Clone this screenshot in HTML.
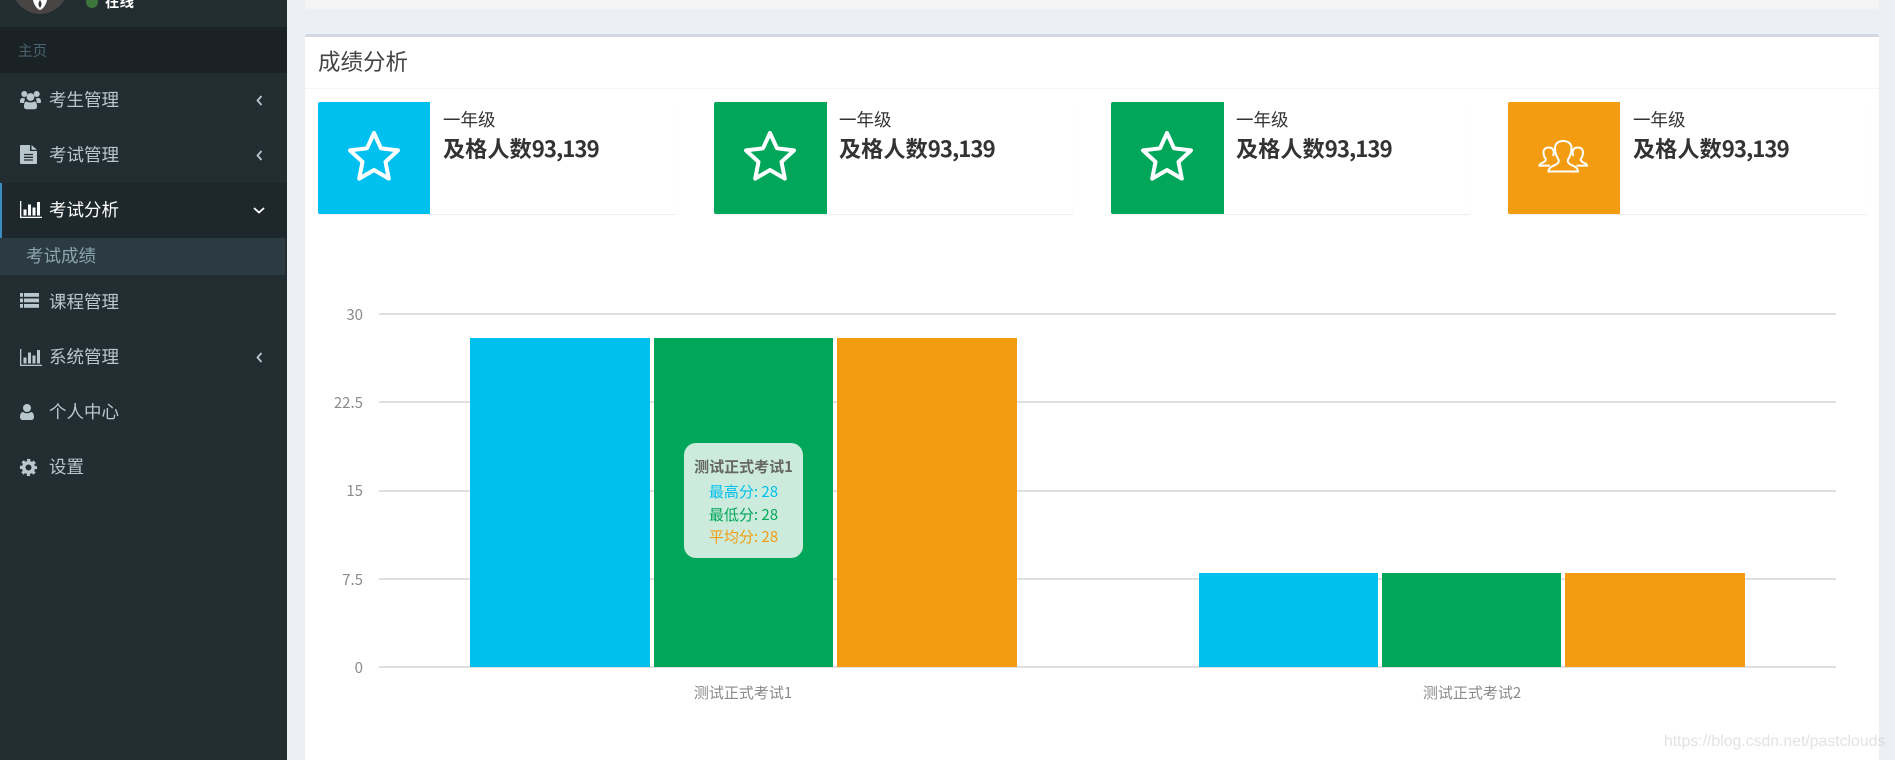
<!DOCTYPE html>
<html lang="zh">
<head>
<meta charset="utf-8">
<title>成绩分析</title>
<style>
html,body{margin:0;padding:0;width:1895px;height:760px;overflow:hidden}
body{position:relative;background:#ecf0f5;font-family:"Liberation Sans","Noto Sans CJK SC",sans-serif;}
.a{position:absolute;white-space:nowrap}
.cjk{font-family:"Noto Sans CJK SC",sans-serif}
#side{position:absolute;left:0;top:0;width:287px;height:760px;background:#222d32;overflow:hidden}
.m{position:absolute;left:49px;font-family:"Noto Sans CJK SC",sans-serif;font-size:17.5px;line-height:28px;height:28px;color:#b8c7ce;white-space:nowrap}
svg{position:absolute;display:block;overflow:visible}
.card{position:absolute;top:102px;width:359px;height:112px;background:#fff;border-radius:2px;box-shadow:0 1px 1px rgba(0,0,0,.07)}
.ib{position:absolute;left:0;top:0;width:112px;height:112px;border-radius:2px 0 0 2px}
.t1{position:absolute;left:125px;top:5px;font-family:"Noto Sans CJK SC",sans-serif;font-size:17.5px;line-height:26px;color:#333;white-space:nowrap}
.t2{position:absolute;left:125px;top:31px;font-family:"Noto Sans CJK SC",sans-serif;font-weight:700;font-size:22.2px;line-height:30px;color:#333;white-space:nowrap}
.t2 span{letter-spacing:-.95px}
.g{position:absolute;left:379px;width:1457px;height:2px;background:#e0e0e0}
.yl{position:absolute;right:1532px;font-family:"Noto Sans CJK SC",sans-serif;font-size:15px;line-height:20px;color:#8a8a8a}
.b{position:absolute;width:180px}
.xl{position:absolute;top:682px;width:200px;text-align:center;font-family:"Noto Sans CJK SC",sans-serif;font-size:15px;line-height:22px;color:#8a8a8a}
.tr{position:absolute;left:0;width:119px;text-align:center;font-family:"Noto Sans CJK SC",sans-serif;font-size:15px;line-height:22px;white-space:nowrap}
</style>
</head>
<body>
<div id="side">
  <!-- user panel -->
  <div class="a" style="left:12px;top:-42px;width:56px;height:56px;border-radius:50%;background:#4a4545"></div>
  <svg style="left:32px;top:0" width="16" height="12" viewBox="0 0 16 12"><path d="M1 0 C2 5 5 9 8 10 C11 9 14 5 15 0Z" fill="#fff"/><path d="M8 0 C6 3 6 5 8 8 C10 5 10 3 8 0Z" fill="#333"/></svg>
  <div class="a" style="left:86px;top:-4px;width:12px;height:12px;border-radius:50%;background:#3c763d"></div>
  <div class="a cjk" style="left:105px;top:-9px;font-size:14.5px;line-height:22px;font-weight:700;color:#fff">在线</div>
  <!-- header -->
  <div class="a" style="left:0;top:27px;width:287px;height:46px;background:#1a2226"></div>
  <div class="a cjk" style="left:18px;top:40px;font-size:14.5px;line-height:22px;color:#4b646f">主页</div>
  <!-- active row -->
  <div class="a" style="left:0;top:183px;width:287px;height:55px;background:#1e282c"></div>
  <div class="a" style="left:0;top:183px;width:2px;height:55px;background:#3c8dbc"></div>
  <div class="a" style="left:0;top:238px;width:285px;height:37px;background:#2c3b41"></div>

  <!-- users -->
  <svg style="left:20px;top:90px" width="21" height="20" viewBox="0 0 21 20" fill="#b8c7ce"><circle cx="4.300" cy="4" r="3"/><circle cx="16.700" cy="4" r="3"/><circle cx="10.500" cy="7" r="3.900"/><path d="M0 12c0-2.700.8-4 2.800-4 1 0 1.400.5 2.400.8-.8 1.200-1 2.700-1 4.200H1c-.6 0-1-.4-1-1zM21 12c0-2.700-.8-4-2.800-4-1 0-1.400.5-2.400.8.800 1.200 1 2.700 1 4.200H20c.6 0 1-.4 1-1z"/><path d="M6.500 11.500c1 .6 2.500 1 4 1s3-.4 4-1c1.700 0 2.500 2.200 2.500 5 0 1.700-1 2.700-2.500 2.700h-8c-1.500 0-2.500-1-2.500-2.700 0-2.800.8-5 2.500-5z"/></svg>
  <div class="m" style="top:86px">考生管理</div>
  <svg style="left:256px;top:95px" width="7" height="11" viewBox="0 0 7 11"><path d="M5.500 1 1.500 5.500l4 4.500" fill="none" stroke="#b8c7ce" stroke-width="1.800"/></svg>

  <!-- file -->
  <svg style="left:20px;top:145px" width="17" height="19" viewBox="0 0 17 19"><path d="M1 0H10V6H17V18a1 1 0 0 1-1 1H1a1 1 0 0 1-1-1V1a1 1 0 0 1 1-1zM11.500 0 17 4.800H11.500z" fill="#b8c7ce"/><path d="M4 9.500h9M4 12.300h9M4 15h9" stroke="#222d32" stroke-width="1.300"/></svg>
  <div class="m" style="top:141px">考试管理</div>
  <svg style="left:256px;top:150px" width="7" height="11" viewBox="0 0 7 11"><path d="M5.500 1 1.500 5.500l4 4.500" fill="none" stroke="#b8c7ce" stroke-width="1.800"/></svg>

  <!-- bar active -->
  <svg style="left:20px;top:201px" width="22" height="17" viewBox="0 0 22 17" fill="#fff"><path d="M0 0h1.300v15.700H22V17H0z"/><rect x="3.500" y="8.500" width="3" height="6"/><rect x="8" y="3.500" width="3" height="11"/><rect x="12.500" y="6.500" width="3" height="8"/><rect x="17" y="1" width="3" height="13.500"/></svg>
  <div class="m" style="top:196px;color:#fff">考试分析</div>
  <svg style="left:253px;top:207px" width="12" height="7" viewBox="0 0 12 7"><path d="M1 1l5 4.500L11 1" fill="none" stroke="#fff" stroke-width="1.800"/></svg>

  <div class="m" style="left:26px;top:242px;color:#8aa4af">考试成绩</div>

  <!-- list -->
  <svg style="left:20px;top:293px" width="19" height="15" viewBox="0 0 19 15" fill="#b8c7ce"><rect x="0" y="0" width="3" height="3.800"/><rect x="4" y="0" width="15" height="3.800"/><rect x="0" y="5.500" width="3" height="3.800"/><rect x="4" y="5.500" width="15" height="3.800"/><rect x="0" y="11" width="3" height="3.800"/><rect x="4" y="11" width="15" height="3.800"/></svg>
  <div class="m" style="top:288px">课程管理</div>

  <!-- bar -->
  <svg style="left:20px;top:349px" width="22" height="17" viewBox="0 0 22 17" fill="#b8c7ce"><path d="M0 0h1.300v15.700H22V17H0z"/><rect x="3.500" y="8.500" width="3" height="6"/><rect x="8" y="3.500" width="3" height="11"/><rect x="12.500" y="6.500" width="3" height="8"/><rect x="17" y="1" width="3" height="13.500"/></svg>
  <div class="m" style="top:343px">系统管理</div>
  <svg style="left:256px;top:352px" width="7" height="11" viewBox="0 0 7 11"><path d="M5.500 1 1.500 5.500l4 4.500" fill="none" stroke="#b8c7ce" stroke-width="1.800"/></svg>

  <!-- user -->
  <svg style="left:20px;top:404px" width="14" height="16" viewBox="0 0 14 16" fill="#b8c7ce"><circle cx="7" cy="4" r="4"/><path d="M3 8c1 .8 2.500 1.300 4 1.300s3-.5 4-1.300c2 .2 3 2.200 3 5 0 2-1.200 3-3 3H3c-1.800 0-3-1-3-3 0-2.800 1-4.800 3-5z"/></svg>
  <div class="m" style="top:398px">个人中心</div>

  <!-- cog -->
  <svg style="left:20px;top:459px" width="17" height="17" viewBox="0 0 17 17"><circle cx="8.500" cy="8.500" r="4.800" fill="none" stroke="#b8c7ce" stroke-width="3.600"/><circle cx="8.500" cy="8.500" r="7.300" fill="none" stroke="#b8c7ce" stroke-width="2.600" stroke-dasharray="3.200 2.530" stroke-dashoffset="1.600"/></svg>
  <div class="m" style="top:453px">设置</div>
</div>

<!-- top box -->
<div class="a" style="left:305px;top:-5px;width:1574px;height:14px;background:#f5f5f5;border-radius:3px"></div>

<!-- main box -->
<div class="a" style="left:305px;top:34px;width:1574px;height:726px;background:#fff;border-top:3px solid #d2d6de;border-radius:3px 3px 0 0;box-sizing:border-box"></div>
<div class="a" style="left:305px;top:88px;width:1574px;height:1px;background:#f4f4f4"></div>
<div class="a cjk" style="left:318px;top:45px;font-size:22.5px;line-height:32px;color:#444">成绩分析</div>

<!-- cards -->
<div class="card" style="left:318px"><div class="ib" style="background:#00c0ef"></div>
  <svg style="left:0;top:0" width="112" height="112" viewBox="0 0 112 112"><path d="M56 31 63 46.300 80 48.400 67.500 59.900 70.800 76.600 56 68 41.200 76.600 44.500 59.900 32 48.400 49 46.300Z" fill="none" stroke="#fff" stroke-width="4" stroke-linejoin="round"/></svg>
  <div class="t1">一年级</div><div class="t2">及格人数<span>93,139</span></div></div>
<div class="card" style="left:714px"><div class="ib" style="background:#00a65a;width:113px"></div>
  <svg style="left:0;top:0" width="112" height="112" viewBox="0 0 112 112"><path d="M56 31 63 46.300 80 48.400 67.500 59.900 70.800 76.600 56 68 41.200 76.600 44.500 59.900 32 48.400 49 46.300Z" fill="none" stroke="#fff" stroke-width="4" stroke-linejoin="round"/></svg>
  <div class="t1">一年级</div><div class="t2">及格人数<span>93,139</span></div></div>
<div class="card" style="left:1111px"><div class="ib" style="background:#00a65a;width:113px"></div>
  <svg style="left:0;top:0" width="112" height="112" viewBox="0 0 112 112"><path d="M56 31 63 46.300 80 48.400 67.500 59.900 70.800 76.600 56 68 41.200 76.600 44.500 59.900 32 48.400 49 46.300Z" fill="none" stroke="#fff" stroke-width="4" stroke-linejoin="round"/></svg>
  <div class="t1">一年级</div><div class="t2">及格人数<span>93,139</span></div></div>
<div class="card" style="left:1508px"><div class="ib" style="background:#f39c12"></div>
  <svg style="left:0;top:0" width="112" height="112" viewBox="0 0 112 112"><g fill="none" stroke="#fff" stroke-width="2"><path d="M40.500 69.500H70C70 65.500 66.500 64.500 62.500 62.500C59.500 61 59.500 59 60 57.500C62 54.500 63.500 50.500 63.500 46C63.500 41.500 60 39 55.200 39C50.500 39 47 41.500 47 46C47 50.500 48.500 54.500 50.500 57.500C51 59 51 61 48 62.500C44 64.500 40.500 65.500 40.500 69.500Z"/><path d="M45 54C45.800 52.500 46 50.500 45.600 48.800C45 46.500 43 45.500 40.500 45.500C37.500 45.500 35.500 47.500 35.500 50.500C35.500 53.500 36.500 55.500 37.800 57C38 59 36.500 60 34.500 60.800C32.500 61.600 31.500 62.300 31.500 63.600H42"/><path d="M65.500 54C64.700 52.500 64.500 50.500 64.900 48.800C65.500 46.500 67.500 45.500 70 45.500C73 45.500 75 47.500 75 50.500C75 53.500 74 55.500 72.700 57C72.500 59 74 60 76 60.800C78 61.600 79 62.300 79 63.600H68.500"/></g></svg>
  <div class="t1">一年级</div><div class="t2">及格人数<span>93,139</span></div></div>

<!-- chart -->
<div class="g" style="top:313px"></div>
<div class="g" style="top:401px"></div>
<div class="g" style="top:490px"></div>
<div class="g" style="top:578px"></div>
<div class="g" style="top:666px"></div>
<div class="yl" style="top:305px">30</div>
<div class="yl" style="top:393px">22.5</div>
<div class="yl" style="top:481px">15</div>
<div class="yl" style="top:570px">7.5</div>
<div class="yl" style="top:658px">0</div>

<div class="b" style="left:470px;top:338px;height:329px;background:#00c0ef"></div>
<div class="b" style="left:654px;top:338px;height:329px;width:179px;background:#00a65a"></div>
<div class="b" style="left:837px;top:338px;height:329px;background:#f39c12"></div>
<div class="b" style="left:1199px;top:573px;height:94px;width:179px;background:#00c0ef"></div>
<div class="b" style="left:1382px;top:573px;height:94px;width:179px;background:#00a65a"></div>
<div class="b" style="left:1565px;top:573px;height:94px;background:#f39c12"></div>

<div class="xl" style="left:643px">测试正式考试1</div>
<div class="xl" style="left:1372px">测试正式考试2</div>

<!-- tooltip -->
<div class="a" style="left:684px;top:443px;width:119px;height:115px;background:#ccebdc;border-radius:12px">
  <div class="tr" style="top:13px;font-weight:700;color:#666">测试正式考试1</div>
  <div class="tr" style="top:38px;color:#00c0ef">最高分: 28</div>
  <div class="tr" style="top:61px;color:#00a65a">最低分: 28</div>
  <div class="tr" style="top:83px;color:#f39c12">平均分: 28</div>
</div>

<!-- watermark -->
<div class="a" style="left:1664px;top:730px;font-family:'Liberation Sans',sans-serif;font-size:15.8px;line-height:24px;color:rgba(190,190,190,.45)">https://blog.csdn.net/pastclouds</div>
</body>
</html>
